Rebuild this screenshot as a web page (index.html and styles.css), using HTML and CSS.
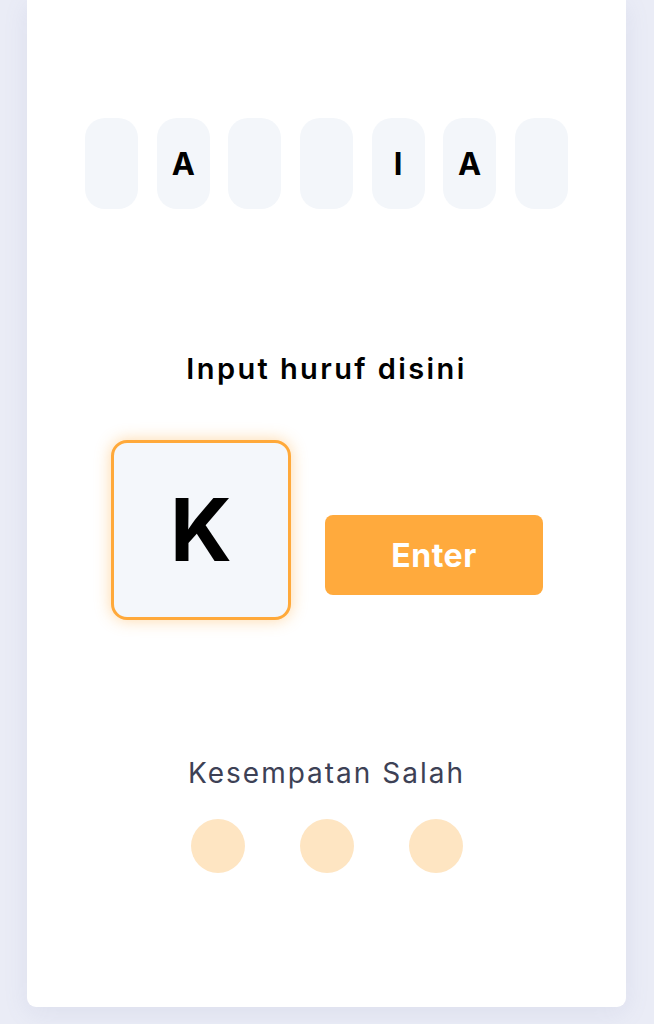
FILE: index.html
```html
<!DOCTYPE html>
<html lang="id">
<head>
<meta charset="UTF-8" />
<meta name="viewport" content="width=device-width, initial-scale=1" />
<title>Tebak Kata</title>
<link rel="stylesheet" href="styles.css">
</head>
<body>

<div class="card">
  <div class="word">
    <div class="slot"></div>
    <div class="slot">A</div>
    <div class="slot"></div>
    <div class="slot"></div>
    <div class="slot">I</div>
    <div class="slot">A</div>
    <div class="slot"></div>
  </div>

  <h2 class="label">Input huruf disini</h2>

  <div class="guess">
    <input class="letter" type="text" maxlength="1" value="K" />
    <button class="enter">Enter</button>
  </div>

  <p class="lives-title">Kesempatan Salah</p>
  <div class="lives">
    <span class="life"></span>
    <span class="life"></span>
    <span class="life"></span>
  </div>
</div>

</body>
</html>
```

FILE: styles.css
```css
* {
  box-sizing: border-box;
}

body {
  margin: 0;
  padding: 0 28px 0 27px;
  background: #eaecf6;
  font-family: Inter, "Open Sans", sans-serif;
  height: 1024px;
  overflow: hidden;
}

.card {
  background: #fff;
  height: 1007px;
  border-radius: 0 0 9px 9px;
  box-shadow: 0 6px 24px rgba(120, 130, 180, 0.12);
  display: flex;
  flex-direction: column;
  align-items: center;
  padding-top: 118px;
}

.word {
  display: flex;
  gap: 18.6px;
}

.slot {
  width: 53px;
  height: 91px;
  border-radius: 20px;
  background: #f3f6fa;
  display: flex;
  align-items: center;
  justify-content: center;
  font-size: 31px;
  font-weight: 700;
  color: #000;
}

.label {
  margin: 139px 0 0;
  height: 42px;
  line-height: 42px;
  font-size: 29px;
  font-weight: 600;
  color: #000;
  letter-spacing: 2.4px;
}

.guess {
  display: flex;
  align-items: flex-start;
  gap: 34px;
  margin-top: 50px;
  margin-left: 1px;
}

.letter {
  width: 180px;
  height: 180px;
  border: 3px solid #ffa93a;
  border-radius: 16px;
  background: #f4f7fb;
  box-shadow: 0 0 16px rgba(255, 169, 58, 0.45);
  text-align: center;
  font-family: inherit;
  font-size: 86px;
  font-weight: 700;
  color: #000;
  outline: none;
}

.enter {
  margin-top: 75px;
  width: 218px;
  height: 80px;
  border: none;
  border-radius: 8px;
  background: #ffaa3d;
  color: #fff;
  font-family: inherit;
  font-size: 32px;
  font-weight: 700;
  letter-spacing: 0.5px;
  cursor: pointer;
}

.lives-title {
  margin: 133px 0 0;
  height: 40px;
  line-height: 40px;
  font-size: 28px;
  font-weight: 400;
  color: #3d4155;
  letter-spacing: 2px;
}

.lives {
  display: flex;
  gap: 55px;
  margin-top: 26px;
}

.life {
  width: 54px;
  height: 54px;
  border-radius: 50%;
  background: #fee5c2;
}
```
